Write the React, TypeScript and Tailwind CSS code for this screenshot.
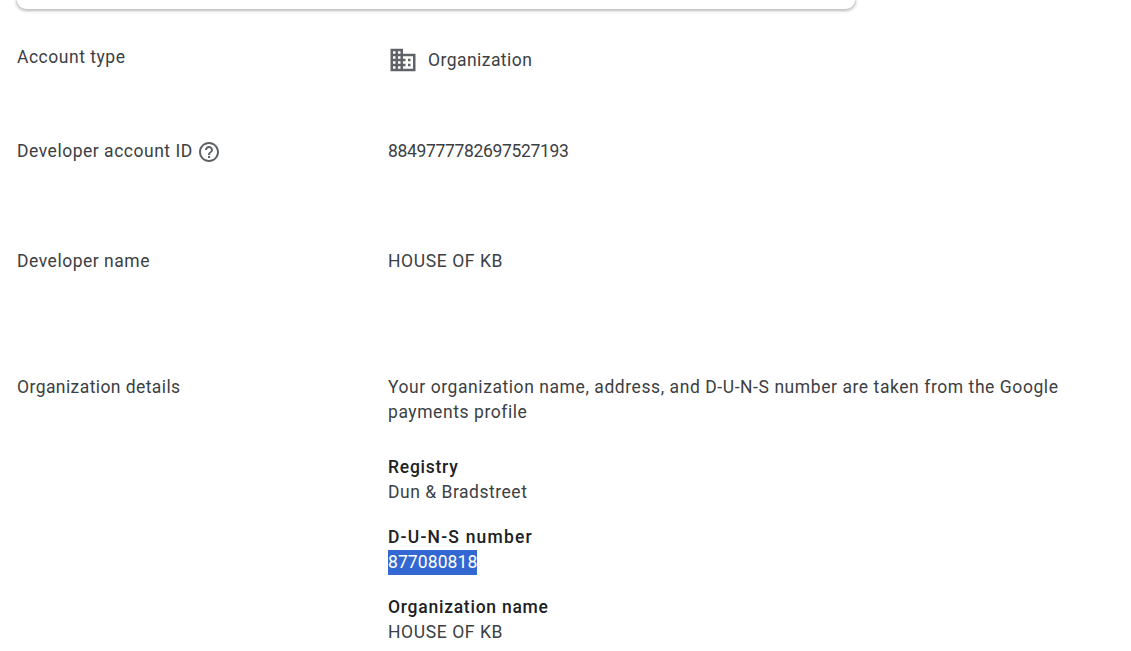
function BuildingIcon() {
  return (
    <svg width="30" height="30" viewBox="0 0 24 24" className="block shrink-0 fill-[#5f6368]">
      <path d="M12 7V3H2v18h20V7H12zM6 19H4v-2h2v2zm0-4H4v-2h2v2zm0-4H4V9h2v2zm0-4H4V5h2v2zm4 12H8v-2h2v2zm0-4H8v-2h2v2zm0-4H8V9h2v2zm0-4H8V5h2v2zm10 12h-8v-2h2v-2h-2v-2h2v-2h-2V9h8v10zm-2-8h-2v2h2v-2zm0 4h-2v2h2v-2z" />
    </svg>
  )
}

function HelpIcon() {
  return (
    <svg width="24" height="24" viewBox="0 0 24 24" className="block shrink-0 fill-[#5f6368]">
      <path d="M11 18h2v-2h-2v2zm1-16C6.480 2 2 6.480 2 12s4.480 10 10 10 10-4.480 10-10S17.520 2 12 2zm0 18c-4.410 0-8-3.590-8-8s3.590-8 8-8 8 3.590 8 8-3.590 8-8 8zm0-14c-2.210 0-4 1.790-4 4h2c0-1.100.9-2 2-2s2 .9 2 2c0 2-3 1.750-3 5h2c0-2.250 3-2.500 3-5 0-2.210-1.790-4-4-4z" />
    </svg>
  )
}

function Field({ title, titleClass, children }: { title: string; titleClass: string; children: React.ReactNode }) {
  return (
    <div className="mt-[20px]">
      <div className={`font-[475] text-[#202124] ${titleClass}`}>{title}</div>
      <div>{children}</div>
    </div>
  )
}

export default function App() {
  return (
    <div className="h-[651px] w-[1131px] overflow-hidden bg-white pl-[17px] font-['Roboto',sans-serif] text-[17.500px] leading-[25px] tracking-[0.520px] text-[#3c4043]">
      <div className="h-[9px] w-[838px] rounded-b-[14px] bg-white shadow-[0_1px_3px_1px_rgba(60,64,67,0.35)]" />

      <div className="mt-[36px] grid grid-cols-[371px_1fr]">
        <div>Account type</div>
        <div className="flex items-center gap-[10px]">
          <BuildingIcon />
          <span className="tracking-[0.450px]">Organization</span>
        </div>
      </div>

      <div className="mt-[64px] grid grid-cols-[371px_1fr]">
        <div className="flex items-center gap-[4px]">
          <span>Developer account ID</span>
          <HelpIcon />
        </div>
        <div className="tracking-[-0.330px]">8849777782697527193</div>
      </div>

      <div className="mt-[85px] grid grid-cols-[371px_1fr]">
        <div>Developer name</div>
        <div className="tracking-[0.600px]">HOUSE OF KB</div>
      </div>

      <div className="mt-[101px] grid grid-cols-[371px_1fr]">
        <div className="tracking-[0.420px]">Organization details</div>
        <div>
          <div className="w-[700px] tracking-[0.570px]">
            Your organization name, address, and D-U-N-S number are taken from the Google payments profile
          </div>
          <Field title="Registry" titleClass="mt-[30px] tracking-[0.750px]">Dun &amp; Bradstreet</Field>
          <Field title="D-U-N-S number" titleClass="tracking-[1.200px]">
            <span className="inline-block bg-[#3367d1] tracking-[0.100px] text-white">877080818</span>
          </Field>
          <Field title="Organization name" titleClass="tracking-[0.750px]">
            <span className="tracking-[0.600px]">HOUSE OF KB</span>
          </Field>
        </div>
      </div>
    </div>
  )
}
